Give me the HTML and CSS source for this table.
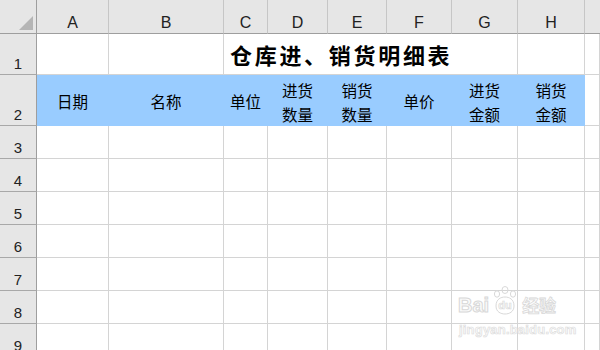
FILE: index.html
```html
<!DOCTYPE html>
<html lang="zh">
<head>
<meta charset="utf-8">
<title>仓库进、销货明细表</title>
<link rel="stylesheet" href="styles.css">
</head>
<body>
<div class="sheet">
  <div class="corner hdr"><span class="tri"></span></div>
  <div class="hdr col">A</div>
  <div class="hdr col">B</div>
  <div class="hdr col">C</div>
  <div class="hdr col">D</div>
  <div class="hdr col">E</div>
  <div class="hdr col">F</div>
  <div class="hdr col">G</div>
  <div class="hdr col">H</div>
  <div class="hdr col last"></div>

  <div class="hdr row">1</div>
  <div class="cell"></div>
  <div class="cell"></div>
  <div class="cell title">仓库进、销货明细表</div>
  <div class="cell"></div>
  <div class="cell"></div>

  <div class="hdr row">2</div>
  <div class="cell blue">日期</div>
  <div class="cell blue">名称</div>
  <div class="cell blue">单位</div>
  <div class="cell blue two">进货<br>数量</div>
  <div class="cell blue two">销货<br>数量</div>
  <div class="cell blue">单价</div>
  <div class="cell blue two">进货<br>金额</div>
  <div class="cell blue two">销货<br>金额</div>
  <div class="cell"></div>

  <div class="hdr row">3</div>
  <div class="cell"></div><div class="cell"></div><div class="cell"></div><div class="cell"></div><div class="cell"></div><div class="cell"></div><div class="cell"></div><div class="cell"></div><div class="cell"></div>
  <div class="hdr row">4</div>
  <div class="cell"></div><div class="cell"></div><div class="cell"></div><div class="cell"></div><div class="cell"></div><div class="cell"></div><div class="cell"></div><div class="cell"></div><div class="cell"></div>
  <div class="hdr row">5</div>
  <div class="cell"></div><div class="cell"></div><div class="cell"></div><div class="cell"></div><div class="cell"></div><div class="cell"></div><div class="cell"></div><div class="cell"></div><div class="cell"></div>
  <div class="hdr row">6</div>
  <div class="cell"></div><div class="cell"></div><div class="cell"></div><div class="cell"></div><div class="cell"></div><div class="cell"></div><div class="cell"></div><div class="cell"></div><div class="cell"></div>
  <div class="hdr row">7</div>
  <div class="cell"></div><div class="cell"></div><div class="cell"></div><div class="cell"></div><div class="cell"></div><div class="cell"></div><div class="cell"></div><div class="cell"></div><div class="cell"></div>
  <div class="hdr row">8</div>
  <div class="cell"></div><div class="cell"></div><div class="cell"></div><div class="cell"></div><div class="cell"></div><div class="cell"></div><div class="cell"></div><div class="cell"></div><div class="cell"></div>
  <div class="hdr row">9</div>
  <div class="cell"></div><div class="cell"></div><div class="cell"></div><div class="cell"></div><div class="cell"></div><div class="cell"></div><div class="cell"></div><div class="cell"></div><div class="cell"></div>
</div>

<div class="watermark">
  <div class="wm-top">
    <span class="wm-bai">Bai</span>
    <span class="wm-paw">
      <svg width="30" height="30" viewBox="0 0 30 30">
        <g fill="none" stroke="#d9d9d9" stroke-width="1">
          <ellipse cx="15" cy="4" rx="3" ry="3.5"/>
          <ellipse cx="7" cy="8" rx="2.6" ry="3.2"/>
          <ellipse cx="23" cy="8" rx="2.6" ry="3.2"/>
          <path d="M6 20 C6 13 11 11 15 11 C19 11 24 13 24 20 C24 26 19 28 15 28 C11 28 6 26 6 20 Z"/>
        </g>
        <text x="15" y="23" text-anchor="middle" class="wm-du">du</text>
      </svg>
    </span>
    <span class="wm-jy">经验</span>
  </div>
  <div class="wm-url">jingyan.baidu.com</div>
</div>
</body>
</html>
```
FILE: styles.css
```css
html, body {
  margin: 0;
  padding: 0;
  background: #ffffff;
  overflow: hidden;
}

.sheet {
  display: grid;
  grid-template-columns: 37px 72px 115px 44px 60px 59px 65px 66px 67px 1fr;
  grid-template-rows: 34px 41px 51px repeat(7, 33px);
  width: 600px;
  height: 350px;
  overflow: hidden;
  font-family: "Noto Sans CJK SC", "Noto Sans", sans-serif;
}

.hdr {
  background: #e6e6e6;
  color: #222222;
  font-family: "Liberation Sans", Arial, sans-serif;
  font-size: 16px;
  line-height: 18px;
  display: flex;
  align-items: flex-end;
  justify-content: center;
  box-sizing: border-box;
  padding-bottom: 1px;
}

.hdr.col {
  border-right: 1px solid #c6c6c6;
  border-bottom: 1px solid #9e9e9e;
}

.hdr.col.last {
  border-right: none;
}

.hdr.row {
  font-size: 15px;
  border-right: 1px solid #9e9e9e;
  border-bottom: 1px solid #a8a8a8;
  padding-bottom: 1px;
}

.corner {
  position: relative;
  border-right: 1px solid #9e9e9e;
  border-bottom: 1px solid #9e9e9e;
}

.corner .tri {
  position: absolute;
  right: 3px;
  bottom: 3px;
  width: 0;
  height: 0;
  border-left: 14px solid transparent;
  border-bottom: 14px solid #b5b5b5;
}

.cell {
  box-sizing: border-box;
  border-right: 1px solid #d4d4d4;
  border-bottom: 1px solid #d4d4d4;
  background: #ffffff;
  color: #000000;
  display: flex;
  align-items: center;
  justify-content: center;
  text-align: center;
  font-size: 15px;
}

.cell.title {
  grid-column: span 5;
  justify-content: flex-start;
  padding-left: 6px;
  font-size: 22px;
  font-weight: bold;
  letter-spacing: 2.7px;
  white-space: nowrap;
}

.cell.blue {
  background: #99ccff;
  border-color: #99ccff;
  font-size: 15.5px;
  line-height: 24px;
  padding-top: 2px;
}

.cell.two {
  padding-top: 3px;
}

.watermark {
  position: absolute;
  left: 458px;
  top: 282px;
  width: 120px;
  color: #ffffff;
  font-family: "Liberation Sans", Arial, sans-serif;
  pointer-events: none;
}

.wm-top {
  display: flex;
  align-items: flex-end;
  height: 34px;
}

.wm-bai {
  font-size: 20px;
  font-weight: bold;
  color: #fbfbfb;
  -webkit-text-stroke: 1px #d8d8d8;
  line-height: 20px;
  margin-bottom: 1px;
}

.wm-paw {
  display: flex;
  margin-left: 1px;
}

.wm-du {
  font-family: "Liberation Sans", Arial, sans-serif;
  font-size: 11px;
  font-weight: bold;
  fill: #fbfbfb;
  stroke: #d8d8d8;
  stroke-width: 0.6;
}

.wm-jy {
  font-family: "Noto Sans CJK SC", sans-serif;
  font-size: 17px;
  font-weight: bold;
  color: #fbfbfb;
  -webkit-text-stroke: 0.8px #d8d8d8;
  line-height: 20px;
  margin-left: 2px;
  margin-bottom: 1px;
}

.wm-url {
  font-size: 13px;
  font-weight: bold;
  color: #fbfbfb;
  -webkit-text-stroke: 0.6px #dadada;
  margin-top: 6px;
  margin-left: 1px;
  letter-spacing: 0.2px;
}
```
